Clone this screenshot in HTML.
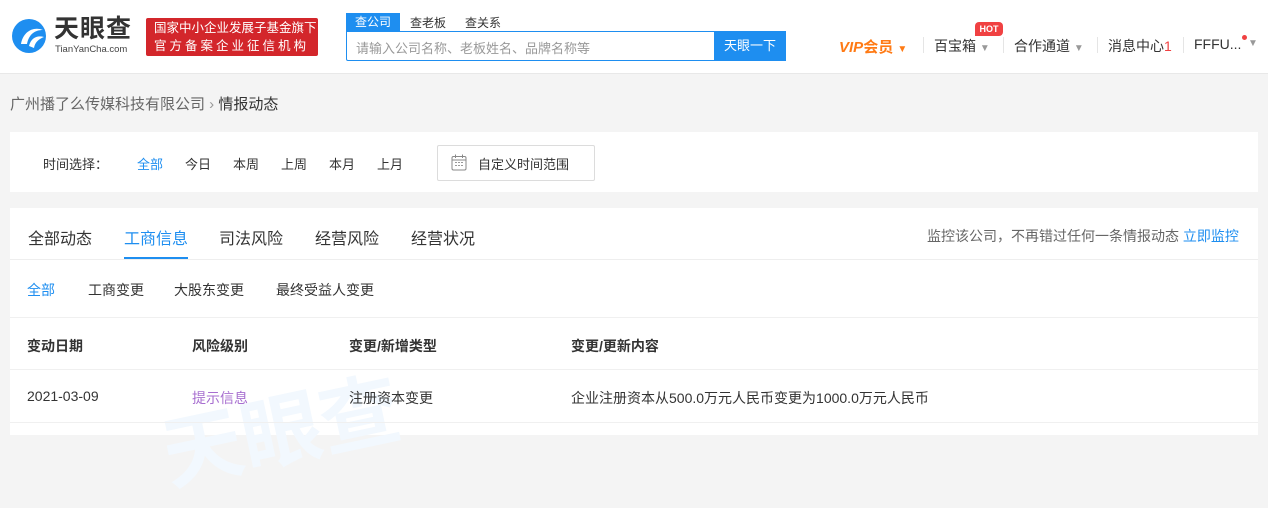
<!DOCTYPE html>
<html><head><meta charset="utf-8"><style>
*{margin:0;padding:0;box-sizing:border-box}
body{width:1268px;height:435px;overflow:hidden;background:#f4f4f4;font-family:"Liberation Sans","Noto Sans CJK SC",sans-serif;color:#333;position:relative}
.abs{position:absolute;white-space:nowrap}
.hdr{position:absolute;left:0;top:0;width:1268px;height:74px;background:#fff;border-bottom:1px solid #e8e8e8}
.card{position:absolute;background:#fff}
</style></head><body>
<div class="hdr">
 <svg class="abs" style="left:11px;top:18px" width="36" height="36" viewBox="0 0 36 36"><circle cx="18" cy="18" r="17" fill="#1e8ef0"/><path d="M10 26 C12 14 22 8 32 12 C24 12 18 16 16 26 Z" fill="#fff"/><path d="M18 28 C20 20 26 17 33 19 C28 21 24 24 23 30 Z" fill="#fff"/></svg>
 <div class="abs" style="left:54px;top:14px;font-size:25px;line-height:30px;color:#333;font-weight:bold;letter-spacing:1px">天眼查</div>
 <div class="abs" style="left:55px;top:44px;font-size:9.5px;line-height:11px;color:#444">TianYanCha.com</div>
 <div class="abs" style="left:146px;top:18px;width:172px;height:38px;background:#d3262b;border-radius:2px;color:#fff;font-size:12.5px;line-height:18px;padding:1px 0 0 8px;overflow:hidden">国家中小企业发展子基金旗下<br><span style="letter-spacing:3px">官方备案企业征信机构</span></div>
 <div class="abs" style="left:346px;top:13px;width:54px;height:19px;background:#1e8ef0;color:#fff;font-size:12px;text-align:center;line-height:19px">查公司</div>
 <div class="abs" style="left:410px;top:14px;font-size:12px;color:#333">查老板</div>
 <div class="abs" style="left:465px;top:14px;font-size:12px;color:#333">查关系</div>
 <div class="abs" style="left:346px;top:31px;width:440px;height:30px;border:1px solid #1e8ef0;border-radius:0 2px 2px 2px"></div>
 <div class="abs" style="left:356px;top:38px;font-size:13px;color:#999">请输入公司名称、老板姓名、品牌名称等</div>
 <div class="abs" style="left:714px;top:31px;width:72px;height:30px;background:#1e8ef0;color:#fff;font-size:13px;text-align:center;line-height:30px">天眼一下</div>
 <div class="abs" style="left:839px;top:36px;font-size:15px;color:#ff7a14;font-weight:bold;font-style:italic">VIP<span style="font-style:normal">会员</span> <span style="font-size:10px">▼</span></div>
 <div class="abs" style="left:923px;top:37px;width:1px;height:16px;background:#e5e5e5"></div>
 <div class="abs" style="left:934px;top:36px;font-size:14px;color:#333">百宝箱 <span style="font-size:10px;color:#999">▼</span></div>
 <div class="abs" style="left:975px;top:22px;width:28px;height:14px;background:#f04142;border-radius:4px 4px 4px 0;color:#fff;font-size:9px;font-weight:bold;text-align:center;line-height:14px">HOT</div>
 <div class="abs" style="left:1003px;top:37px;width:1px;height:16px;background:#e5e5e5"></div>
 <div class="abs" style="left:1014px;top:36px;font-size:14px;color:#333">合作通道 <span style="font-size:10px;color:#999">▼</span></div>
 <div class="abs" style="left:1097px;top:37px;width:1px;height:16px;background:#e5e5e5"></div>
 <div class="abs" style="left:1108px;top:36px;font-size:14px;color:#333">消息中心<span style="color:#f04142">1</span></div>
 <div class="abs" style="left:1183px;top:37px;width:1px;height:16px;background:#e5e5e5"></div>
 <div class="abs" style="left:1194px;top:36px;font-size:14px;color:#333">FFFU...</div>
 <div class="abs" style="left:1242px;top:35px;width:5px;height:5px;border-radius:50%;background:#f04142"></div>
 <div class="abs" style="left:1248px;top:38px;font-size:10px;color:#999">▼</div>
</div>
<div class="abs" style="left:10px;top:93px;font-size:15px;color:#666">广州播了么传媒科技有限公司 <span style="color:#999">›</span> <span style="color:#333">情报动态</span></div>
<div class="card" style="left:10px;top:132px;width:1248px;height:60px">
 <div class="abs" style="left:33px;top:22px;font-size:13px">时间选择：</div>
 <div class="abs" style="left:127px;top:22px;font-size:13px;color:#1e8ef0">全部</div>
 <div class="abs" style="left:175px;top:22px;font-size:13px">今日</div>
 <div class="abs" style="left:223px;top:22px;font-size:13px">本周</div>
 <div class="abs" style="left:271px;top:22px;font-size:13px">上周</div>
 <div class="abs" style="left:319px;top:22px;font-size:13px">本月</div>
 <div class="abs" style="left:367px;top:22px;font-size:13px">上月</div>
 <div class="abs" style="left:427px;top:13px;width:158px;height:36px;border:1px solid #dcdcdc;border-radius:2px"></div>
 <svg class="abs" style="left:441px;top:22px" width="16" height="17" viewBox="0 0 16 17"><rect x="1" y="2.5" width="14" height="13.5" rx="1.5" fill="none" stroke="#888"/><line x1="4.5" y1="0.5" x2="4.5" y2="4" stroke="#888"/><line x1="11.5" y1="0.5" x2="11.5" y2="4" stroke="#888"/><line x1="1" y1="6" x2="15" y2="6" stroke="#888"/><g fill="#999"><rect x="4" y="8" width="2" height="1"/><rect x="7" y="8" width="2" height="1"/><rect x="10" y="8" width="2" height="1"/><rect x="4" y="11" width="2" height="1"/><rect x="7" y="11" width="2" height="1"/><rect x="10" y="11" width="2" height="1"/></g></svg>
 <div class="abs" style="left:468px;top:22px;font-size:13px">自定义时间范围</div>
</div>
<div class="card" style="left:10px;top:208px;width:1248px;height:227px">
 <div class="abs" style="left:18px;top:17px;font-size:16px">全部动态</div>
 <div class="abs" style="left:114px;top:17px;font-size:16px;color:#1e8ef0">工商信息</div>
 <div class="abs" style="left:114px;top:49px;width:64px;height:2px;background:#1e8ef0"></div>
 <div class="abs" style="left:209px;top:17px;font-size:16px">司法风险</div>
 <div class="abs" style="left:305px;top:17px;font-size:16px">经营风险</div>
 <div class="abs" style="left:401px;top:17px;font-size:16px">经营状况</div>
 <div class="abs" style="left:917px;top:18px;font-size:14px;color:#666">监控该公司，不再错过任何一条情报动态 <span style="color:#1e8ef0">立即监控</span></div>
 <div class="abs" style="left:0;top:51px;width:1248px;height:1px;background:#eee"></div>
 <div class="abs" style="left:17px;top:72px;font-size:14px;color:#1e8ef0">全部</div>
 <div class="abs" style="left:78px;top:72px;font-size:14px">工商变更</div>
 <div class="abs" style="left:164px;top:72px;font-size:14px">大股东变更</div>
 <div class="abs" style="left:266px;top:72px;font-size:14px">最终受益人变更</div>
 <div class="abs" style="left:0;top:109px;width:1248px;height:1px;background:#f0f0f0"></div>
 <div class="abs" style="left:17px;top:128px;font-size:14px;font-weight:bold">变动日期</div>
 <div class="abs" style="left:182px;top:128px;font-size:14px;font-weight:bold">风险级别</div>
 <div class="abs" style="left:339px;top:128px;font-size:14px;font-weight:bold">变更/新增类型</div>
 <div class="abs" style="left:561px;top:128px;font-size:14px;font-weight:bold">变更/更新内容</div>
 <div class="abs" style="left:0;top:161px;width:1248px;height:1px;background:#f0f0f0"></div>
 <div class="abs" style="left:150px;top:160px;font-size:80px;font-weight:bold;color:#f2f8fe;transform:rotate(-12deg)">天眼查</div>
 <div class="abs" style="left:17px;top:180px;font-size:14px">2021-03-09</div>
 <div class="abs" style="left:182px;top:180px;font-size:14px;color:#a86fd0">提示信息</div>
 <div class="abs" style="left:339px;top:180px;font-size:14px">注册资本变更</div>
 <div class="abs" style="left:561px;top:180px;font-size:14px">企业注册资本从500.0万元人民币变更为1000.0万元人民币</div>
 <div class="abs" style="left:0;top:214px;width:1248px;height:1px;background:#f0f0f0"></div>
</div>
</body></html>
